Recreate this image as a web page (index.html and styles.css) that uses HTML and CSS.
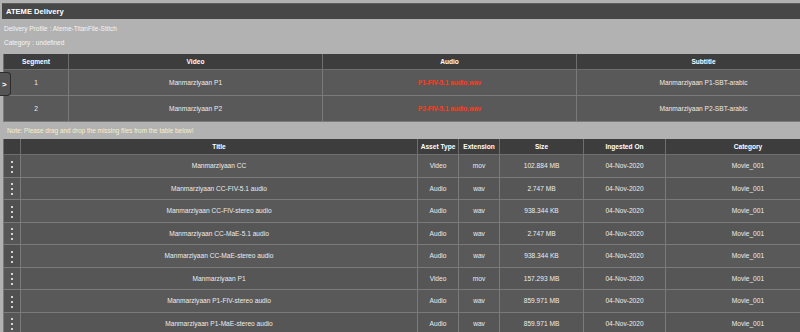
FILE: index.html
```html
<!DOCTYPE html>
<html lang="en">
<head>
  <meta charset="UTF-8">
  <meta name="viewport" content="width=device-width, initial-scale=1.0">
  <title>ATEME Delivery</title>
  <link rel="stylesheet" href="styles.css">
</head>
<body>
  <div class="frame">
    <div class="title-bar">ATEME Delivery</div>
    <div class="info">
      <div>Delivery Profile : Ateme-TitanFile-Stitch</div>
      <div>Category : undefined</div>
    </div>

    <div class="seg-wrap">
      <table class="grid seg">
        <colgroup>
          <col style="width:65px"><col style="width:254px"><col style="width:254px"><col style="width:254px">
        </colgroup>
        <tr class="head">
          <th>Segment</th><th>Video</th><th>Audio</th><th>Subtitle</th>
        </tr>
        <tr>
          <td>1</td><td>Manmarziyaan P1</td><td class="missing">P1-FIV-5.1 audio.wav</td><td>Manmarziyaan P1-SBT-arabic</td>
        </tr>
        <tr>
          <td>2</td><td>Manmarziyaan P2</td><td class="missing">P2-FIV-5.1 audio.wav</td><td>Manmarziyaan P2-SBT-arabic</td>
        </tr>
      </table>
      <div class="seg-tab">&gt;</div>
    </div>

    <div class="note">Note: Please drag and drop the missing files from the table below!</div>

    <table class="grid assets">
      <colgroup>
        <col style="width:17px"><col style="width:397px"><col style="width:41px"><col style="width:41px"><col style="width:84px"><col style="width:82px"><col style="width:165px">
      </colgroup>
      <tr class="head">
        <th></th><th>Title</th><th>Asset Type</th><th>Extension</th><th>Size</th><th>Ingested On</th><th>Category</th>
      </tr>
      <tr>
        <td class="handle"><span class="dots"></span></td><td>Manmarziyaan CC</td><td>Video</td><td>mov</td><td>102.884 MB</td><td>04-Nov-2020</td><td>Movie_001</td>
      </tr>
      <tr>
        <td class="handle"><span class="dots"></span></td><td>Manmarziyaan CC-FIV-5.1 audio</td><td>Audio</td><td>wav</td><td>2.747 MB</td><td>04-Nov-2020</td><td>Movie_001</td>
      </tr>
      <tr>
        <td class="handle"><span class="dots"></span></td><td>Manmarziyaan CC-FIV-stereo audio</td><td>Audio</td><td>wav</td><td>938.344 KB</td><td>04-Nov-2020</td><td>Movie_001</td>
      </tr>
      <tr>
        <td class="handle"><span class="dots"></span></td><td>Manmarziyaan CC-MaE-5.1 audio</td><td>Audio</td><td>wav</td><td>2.747 MB</td><td>04-Nov-2020</td><td>Movie_001</td>
      </tr>
      <tr>
        <td class="handle"><span class="dots"></span></td><td>Manmarziyaan CC-MaE-stereo audio</td><td>Audio</td><td>wav</td><td>938.344 KB</td><td>04-Nov-2020</td><td>Movie_001</td>
      </tr>
      <tr>
        <td class="handle"><span class="dots"></span></td><td>Manmarziyaan P1</td><td>Video</td><td>mov</td><td>157.293 MB</td><td>04-Nov-2020</td><td>Movie_001</td>
      </tr>
      <tr>
        <td class="handle"><span class="dots"></span></td><td>Manmarziyaan P1-FIV-stereo audio</td><td>Audio</td><td>wav</td><td>859.971 MB</td><td>04-Nov-2020</td><td>Movie_001</td>
      </tr>
      <tr>
        <td class="handle"><span class="dots"></span></td><td>Manmarziyaan P1-MaE-stereo audio</td><td>Audio</td><td>wav</td><td>859.971 MB</td><td>04-Nov-2020</td><td>Movie_001</td>
      </tr>
    </table>
  </div>
</body>
</html>
```

FILE: styles.css
```css
html, body {
  margin: 0;
  overflow: hidden;
}
body {
  background: #b2b2b2;
  font-family: "Liberation Sans", Arial, sans-serif;
  color: #f0f0f0;
}
.frame {
  width: 830px;
  padding-top: 3px;
}
.title-bar {
  margin-left: 2px;
  height: 16px;
  line-height: 16px;
  background: #474747;
  border-top: 1px solid #5e5e5e;
  box-sizing: border-box;
  padding-left: 4px;
  font-size: 7.6px;
  font-weight: bold;
  color: #fff;
}
.info {
  height: 35px;
  box-sizing: border-box;
  padding: 3px 0 0 4px;
  font-size: 6.5px;
  line-height: 13.5px;
  color: #f4f4f4;
}
.seg-wrap {
  position: relative;
}
table.grid {
  border-collapse: collapse;
  table-layout: fixed;
  width: 827px;
  margin-left: 3px;
  font-size: 6.6px;
}
.grid th {
  background: #3d3d3d;
  color: #fff;
  font-weight: bold;
  height: 15px;
  padding: 0;
  border: 1px solid #6e6e6e;
  border-top: none;
}
.grid td {
  background: #595959;
  color: #ececec;
  text-align: center;
  padding: 0;
  border: 1px solid #7a7a7a;
}
.seg td {
  height: 25px;
}
.seg td.missing {
  color: #ff3b1c;
  font-weight: bold;
  font-size: 6.4px;
}
.seg-tab {
  position: absolute;
  left: 0;
  top: 18px;
  width: 11px;
  height: 24px;
  background: #545454;
  border: 1px solid #2c2c2c;
  border-left: none;
  border-radius: 0 4px 4px 0;
  color: #fff;
  font-size: 8px;
  font-weight: bold;
  line-height: 23px;
  padding-left: 2px;
  box-sizing: border-box;
}
.note {
  height: 17px;
  line-height: 17px;
  padding-left: 7px;
  font-size: 6.4px;
  color: #f7f0c8;
}
.assets td {
  height: 21.5px;
}
.assets tr:nth-child(odd) td {
  background: #565656;
}
.assets td.handle {
  background: #505050;
}
.dots {
  display: inline-block;
  width: 2px;
  height: 2px;
  border-radius: 50%;
  background: #fff;
  box-shadow: 0 -5px 0 #fff, 0 5px 0 #fff;
  vertical-align: middle;
}
```
